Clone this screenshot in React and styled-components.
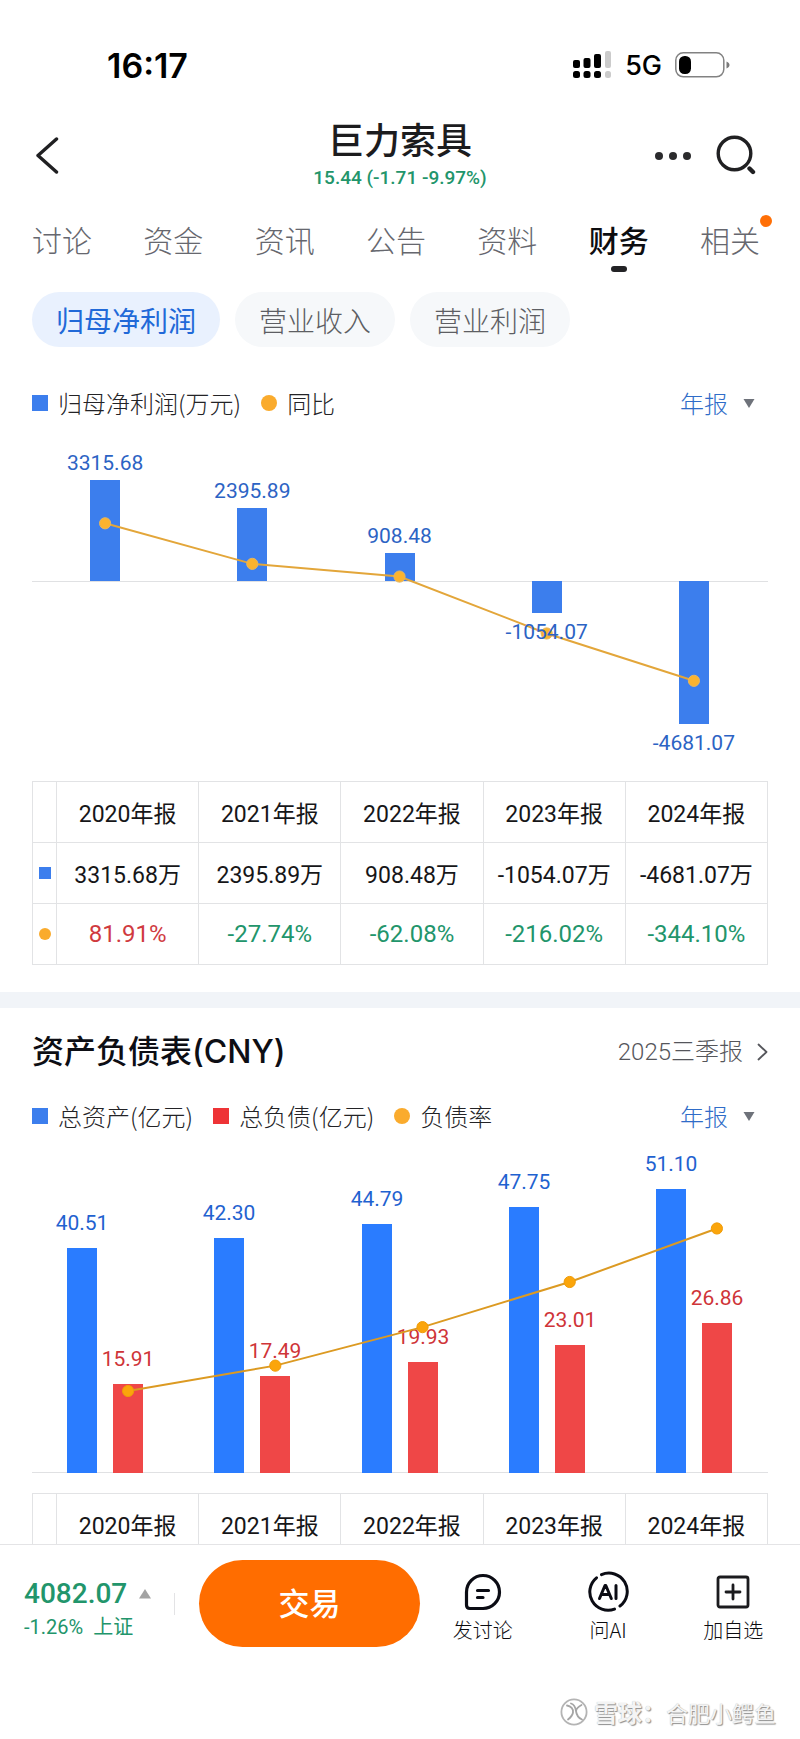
import React from "react";
import styled, { createGlobalStyle, css } from "styled-components";

const CJK = '"Noto Sans CJK SC", sans-serif';
const NUM = 'Roboto, "Noto Sans CJK SC", sans-serif';

const GlobalStyle = createGlobalStyle`
  * { box-sizing: border-box; }
  body { margin: 0; background: #fff; color: #1c1c1e; font-family: ${CJK}; }
  button, select { font: inherit; color: inherit; border: 0; padding: 0; background: none; cursor: pointer; }
  svg { display: block; flex: none; }
  h1, h2, p { margin: 0; font-weight: 500; }
`;

const Page = styled.div`
  height: 100vh;
  display: flex;
  flex-direction: column;
`;

const Content = styled.main`
  flex: 1;
  min-height: 0;
  overflow-y: auto;
  scrollbar-width: none;
`;

const StatusBar = styled.div`
  height: 110px;
  padding: 20px 70px 0 107px;
  display: flex;
  align-items: center;
  justify-content: space-between;
  flex: none;
  color: #000;
  font-family: Inter, sans-serif;
`;

const Clock = styled.span`
  font-size: 34px;
  font-weight: 600;
`;

const StatusIcons = styled.div`
  display: flex;
  align-items: center;
  gap: 13px;
  font-size: 27px;
  font-weight: 500;
`;

const Header = styled.header`
  height: 90px;
  padding: 0 36px;
  display: grid;
  grid-template-columns: 1fr auto 1fr;
  align-items: center;
  flex: none;
`;

const Heading = styled.div`
  display: grid;
  justify-items: center;
  gap: 10px;
`;

const StockName = styled.h1`
  font-size: 36px;
  line-height: 36px;
`;

const Quote = styled.p`
  font-family: ${NUM};
  font-size: 19px;
  line-height: 24px;
  color: #22956b;
`;

const HeaderActions = styled.div`
  display: flex;
  align-items: center;
  justify-content: flex-end;
  gap: 25px;
  padding-right: 7px;
`;

const Tabs = styled.nav`
  display: flex;
  justify-content: space-between;
  padding: 21px 40px 0 32px;
  flex: none;
`;

const Tab = styled.button`
  position: relative;
  display: flex;
  flex-direction: column;
  align-items: center;
  gap: 9px;
  font-size: 30px;
  line-height: 36px;
  font-weight: 300;
  color: #66676e;
  &::after {
    content: "";
    width: 16px;
    height: 6px;
    border-radius: 3px;
  }
  ${(p) =>
    p.$active &&
    css`
      color: #0d0d10;
      font-weight: 500;
      &::after { background: #232326; }
    `}
`;

const Badge = styled.span`
  position: absolute;
  top: -6px;
  right: -12px;
  width: 12px;
  height: 12px;
  border-radius: 50%;
  background: #ff6f06;
`;

const Pills = styled.div`
  display: flex;
  gap: 15px;
  padding: 20px 0 0;
`;

const Pill = styled.button`
  height: 55px;
  padding: 0 24px;
  border-radius: 28px;
  font-size: 28px;
  line-height: 40px;
  font-weight: ${(p) => (p.$active ? 400 : 300)};
  color: ${(p) => (p.$active ? "#2169d8" : "#5d5e63")};
  background: ${(p) => (p.$active ? "#e9f1fe" : "#f6f8fa")};
`;

const Section = styled.section`
  padding: 0 32px 27px;
  & + & {
    border-top: 16px solid #f1f4f8;
    padding-top: 20px;
  }
`;

const SectionHead = styled.div`
  height: 48px;
  margin-bottom: 24px;
  display: flex;
  align-items: center;
  justify-content: space-between;
`;

const SectionTitle = styled.h2`
  font-family: Inter, ${CJK};
  font-size: 32px;
  line-height: 44px;
  color: #0d0e14;
`;

const ReportLink = styled.a`
  display: flex;
  align-items: center;
  gap: 14px;
  font-family: ${NUM};
  font-size: 24px;
  line-height: 32px;
  font-weight: 300;
  color: #55565b;
  text-decoration: none;
`;

const LegendRow = styled.div`
  display: flex;
  align-items: center;
  gap: 20px;
  font-size: 24px;
  line-height: 32px;
  font-weight: 300;
  color: #232326;
  margin-top: ${(p) => p.$top || 0}px;
`;

const LegendItem = styled.span`
  display: flex;
  align-items: center;
  gap: 10px;
`;

const Mark = styled.i`
  display: block;
  flex: none;
  width: ${(p) => p.$size || 16}px;
  height: ${(p) => p.$size || 16}px;
  border-radius: ${(p) => (p.$round ? "50%" : 0)};
  background: ${(p) => p.$color};
`;

const Period = styled.label`
  display: flex;
  align-items: center;
  gap: 15px;
  margin: 0 13px 0 auto;
  color: #2f6cc8;
`;

const PeriodSelect = styled.select`
  appearance: none;
  line-height: 32px;
  outline: none;
`;

const Plot = styled.svg`
  width: 100%;
  height: auto;
  margin: ${(p) => p.$top}px 0 18px;
  overflow: visible;
`;

const BarLabel = styled.text`
  font-family: ${NUM};
  font-size: 21px;
  text-anchor: middle;
`;

const Table = styled.table`
  width: 100%;
  table-layout: fixed;
  border-collapse: collapse;
  font-family: ${NUM};
  font-size: 23px;
  color: #161618;
`;

const Cell = styled.td`
  height: 61px;
  padding: 0;
  border: 1px solid #e2e3e5;
  text-align: center;
  font-weight: 400;
  white-space: nowrap;
`;

const RateCell = styled(Cell)`
  font-size: 24px;
  color: ${(p) => (p.$up ? "#d03a3f" : "#22956b")};
`;

const MarkCell = styled(Cell)`
  width: 24px;
  & > i { margin: 0 auto; }
`;

const BottomBar = styled.footer`
  flex: none;
  border-top: 1px solid #e4e4e6;
  background: #fff;
`;

const Actions = styled.div`
  display: flex;
  align-items: center;
  padding: 15px 4px 0 24px;
`;

const Index = styled.div`
  display: grid;
  gap: 1px;
  width: 150px;
  padding-top: 10px;
  font-family: ${NUM};
  color: #22956b;
`;

const IndexValue = styled.div`
  display: flex;
  align-items: center;
  gap: 12px;
  font-size: 28px;
  line-height: 36px;
  font-weight: 500;
`;

const IndexChange = styled.div`
  display: flex;
  gap: 10px;
  font-size: 20px;
  line-height: 28px;
`;

const Divider = styled.div`
  width: 1px;
  height: 22px;
  margin-right: 24px;
  background: #e3e3e5;
`;

const TradeButton = styled.button`
  width: 221px;
  height: 87px;
  padding-bottom: 4px;
  border-radius: 44px;
  background: #ff6d00;
  color: #fff;
  font-size: 31px;
  font-weight: 500;
`;

const Action = styled.button`
  flex: 1;
  display: flex;
  flex-direction: column;
  align-items: center;
  gap: 3px;
  padding-top: 7px;
  font-size: 20px;
  line-height: 28px;
  color: #0c0c10;
  font-weight: 300;
`;

const Watermark = styled.div`
  display: flex;
  align-items: center;
  justify-content: flex-end;
  gap: 6px;
  padding: 49px 24px 11px 0;
  line-height: 32px;
  font-size: 22px;
  color: #f4f4f4;
  text-shadow: 1px 1px 1px #8e8e8e, 0 0 1px #bbb;
`;

const Brand = styled.span`
  font-size: 24px;
  font-weight: 700;
`;

const WIDTH = 736;
const SLOT = WIDTH / 5;
const BAR = 30;
const centre = (i) => SLOT * (i + 0.5) - 0.5;
const YEARS = ["2020年报", "2021年报", "2022年报", "2023年报", "2024年报"];

const PROFIT = [3315.68, 2395.89, 908.48, -1054.07, -4681.07];
const GROWTH = [81.91, -27.74, -62.08, -216.02, -344.1];
const ASSETS = [40.51, 42.3, 44.79, 47.75, 51.1];
const DEBTS = [15.91, 17.49, 19.93, 23.01, 26.86];

function Line({ points, stroke, fill, ring }) {
  return (
    <g>
      <polyline points={points.map((p) => p.join(",")).join(" ")} fill="none" stroke={stroke} strokeWidth="2" />
      {points.map(([x, y]) => (
        <circle key={x} cx={x} cy={y} r="5.6" fill={fill} stroke={ring} strokeWidth="1" />
      ))}
    </g>
  );
}

function ProfitChart() {
  const zero = 142;
  const scale = 0.0305;
  const points = GROWTH.map((g, i) => [centre(i), 114.6 - g * 0.3697]);
  return (
    <Plot viewBox={`0 0 ${WIDTH} 324`} $top={20} role="img" aria-label="归母净利润">
      <line x1="0" x2={WIDTH} y1={zero + 0.5} y2={zero + 0.5} stroke="#e0e1e3" />
      {PROFIT.map((v, i) => {
        const h = Math.round(Math.abs(v) * scale);
        return (
          <rect key={v} x={Math.round(centre(i)) - 15} y={v > 0 ? zero - h : zero} width={BAR} height={h} fill="#3c7eed" />
        );
      })}
      <Line points={points} stroke="#e3a63a" fill="#fbb32f" ring="#e5b662" />
      {PROFIT.map((v, i) => (
        <BarLabel key={v} x={centre(i)} y={v > 0 ? zero - v * scale - 10 : zero - v * scale + 26} fill="#2c63c4">
          {v.toFixed(2)}
        </BarLabel>
      ))}
    </Plot>
  );
}

function BalanceChart() {
  const base = 333;
  const scale = 5.566;
  const rates = DEBTS.map((d, i) => (d / ASSETS[i]) * 100);
  const points = rates.map((r, i) => [centre(i) + 23, 251 - (r - rates[0]) * 12.23]);
  const series = [
    { data: ASSETS, shift: -23, fill: "#2a7cff", text: "#1f62d0" },
    { data: DEBTS, shift: 23, fill: "#ef4747", text: "#cf3438" },
  ];
  return (
    <Plot viewBox={`0 0 ${WIDTH} 335`} $top={8} role="img" aria-label="资产负债表">
      <line x1="0" x2={WIDTH} y1={base - 0.5} y2={base - 0.5} stroke="#e0e1e3" />
      {series.map((s) =>
        s.data.map((v, i) => {
          const x = Math.round(centre(i) + s.shift);
          const h = Math.round(v * scale);
          return (
            <g key={v}>
              <rect x={x - 15} y={base - h} width={BAR} height={h} fill={s.fill} />
              <BarLabel x={x} y={base - h - 18} fill={s.text}>
                {v.toFixed(2)}
              </BarLabel>
            </g>
          );
        })
      )}
      <Line points={points} stroke="#dc9a22" fill="#fba50b" ring="#f09c08" />
    </Plot>
  );
}

function PeriodPicker() {
  return (
    <Period>
      <PeriodSelect aria-label="报告期" defaultValue="年报">
        <option>年报</option>
      </PeriodSelect>
      <svg width="12" height="10" viewBox="0 0 12 10">
        <path d="M.5 1h11L6 10z" fill="#6e727a" />
      </svg>
    </Period>
  );
}

function YearHead() {
  return (
    <thead>
      <tr>
        <MarkCell />
        {YEARS.map((y) => (
          <Cell as="th" scope="col" key={y}>{y}</Cell>
        ))}
      </tr>
    </thead>
  );
}

const BLUE = "#3c7eed";
const ORANGE = "#faab2d";

export default function App() {
  return (
    <Page>
      <GlobalStyle />
      <StatusBar>
        <Clock>16:17</Clock>
        <StatusIcons>
          <svg width="39" height="28" viewBox="0 0 39 28">
            <g fill="#000">
              <rect x="0" y="9" width="7" height="8" rx="2" />
              <rect x="10.500" y="7" width="7" height="10" rx="2" />
              <rect x="21" y="3" width="7" height="14" rx="2" />
              <rect x="0" y="20" width="7" height="7" rx="2.500" />
              <rect x="10.500" y="20" width="7" height="7" rx="2.500" />
              <rect x="21" y="20" width="7" height="7" rx="2.500" />
            </g>
            <g fill="#cbcbcb">
              <rect x="32" y="0" width="6" height="17" rx="2" />
              <rect x="32" y="20" width="6" height="7" rx="2.500" />
            </g>
          </svg>
          <span>5G</span>
          <svg width="55" height="26" viewBox="0 0 55 26">
            <rect x=".8" y=".8" width="48" height="24" rx="7.500" fill="none" stroke="#828282" strokeWidth="1.500" />
            <rect x="4" y="4" width="12" height="18" rx="5.500" fill="#000" />
            <path d="M51.500 9.500c2 1 3 2 3 3.500s-1 2.500-3 3.500z" fill="#7a7a7a" />
          </svg>
        </StatusIcons>
      </StatusBar>

      <Header>
        <button aria-label="返回">
          <svg width="24" height="38" viewBox="0 0 24 38">
            <path d="M20.500 3 2 19.500 20.500 36" fill="none" stroke="#202022" strokeWidth="3.400" strokeLinecap="round" strokeLinejoin="round" />
          </svg>
        </button>
        <Heading>
          <StockName>巨力索具</StockName>
          <Quote>15.44 (-1.71 -9.97%)</Quote>
        </Heading>
        <HeaderActions>
          <button aria-label="更多">
            <svg width="36" height="10" viewBox="0 0 36 10">
              <g fill="#2b2b2d">
                <circle cx="4" cy="6" r="4" />
                <circle cx="18" cy="6" r="4" />
                <circle cx="32" cy="6" r="4" />
              </g>
            </svg>
          </button>
          <button aria-label="搜索">
            <svg width="41" height="40" viewBox="0 0 41 40">
              <circle cx="18.500" cy="18.500" r="16.300" fill="none" stroke="#202022" strokeWidth="3.400" />
              <path d="m33.500 33.500 3.500 3.500" stroke="#202022" strokeWidth="4.400" strokeLinecap="round" />
            </svg>
          </button>
        </HeaderActions>
      </Header>

      <Tabs>
        {["讨论", "资金", "资讯", "公告", "资料", "财务", "相关"].map((t) => (
          <Tab key={t} $active={t === "财务"}>
            {t}
            {t === "相关" && <Badge />}
          </Tab>
        ))}
      </Tabs>

      <Content>
        <Section>
          <Pills>
            <Pill $active>归母净利润</Pill>
            <Pill>营业收入</Pill>
            <Pill>营业利润</Pill>
          </Pills>
          <LegendRow $top={40}>
            <LegendItem><Mark $color={BLUE} />归母净利润(万元)</LegendItem>
            <LegendItem><Mark $color={ORANGE} $round />同比</LegendItem>
            <PeriodPicker />
          </LegendRow>
          <ProfitChart />
          <Table>
            <YearHead />
            <tbody>
              <tr>
                <MarkCell><Mark $size={12} $color={BLUE} /></MarkCell>
                {PROFIT.map((v) => (
                  <Cell key={v}>{v.toFixed(2)}万</Cell>
                ))}
              </tr>
              <tr>
                <MarkCell><Mark $size={12} $color={ORANGE} $round /></MarkCell>
                {GROWTH.map((v) => (
                  <RateCell key={v} $up={v > 0}>{v.toFixed(2)}%</RateCell>
                ))}
              </tr>
            </tbody>
          </Table>
        </Section>

        <Section>
          <SectionHead>
            <SectionTitle>资产负债表(CNY)</SectionTitle>
            <ReportLink href="#report">
              2025三季报
              <svg width="11" height="18" viewBox="0 0 11 18">
                <path d="m1.500 1.500 8 7.500-8 7.500" fill="none" stroke="#55565b" strokeWidth="1.800" strokeLinecap="round" strokeLinejoin="round" />
              </svg>
            </ReportLink>
          </SectionHead>
          <LegendRow>
            <LegendItem><Mark $color={BLUE} />总资产(亿元)</LegendItem>
            <LegendItem><Mark $color="#ee3336" />总负债(亿元)</LegendItem>
            <LegendItem><Mark $color={ORANGE} $round />负债率</LegendItem>
            <PeriodPicker />
          </LegendRow>
          <BalanceChart />
          <Table>
            <YearHead />
          </Table>
        </Section>
      </Content>

      <BottomBar>
        <Actions>
          <Index>
            <IndexValue>
              4082.07
              <svg width="12" height="10" viewBox="0 0 12 10">
                <path d="M6 0l6 9.500H0z" fill="#a3a3a3" />
              </svg>
            </IndexValue>
            <IndexChange>
              <span>-1.26%</span>
              <span>上证</span>
            </IndexChange>
          </Index>
          <Divider />
          <TradeButton>交易</TradeButton>
          <Action>
            <svg width="42" height="42" viewBox="0 0 42 42" fill="none" stroke="#0b0c14" strokeWidth="3.200" strokeLinecap="round" strokeLinejoin="round">
              <path d="M21 4.500a16.500 16.500 0 0 1 0 33H8q-3.500 0-3.500-3.500V21A16.500 16.500 0 0 1 21 4.500z" />
              <path d="M15.500 19.500h11M15.500 26.500h5.500" />
            </svg>
            发讨论
          </Action>
          <Action>
            <svg width="42" height="42" viewBox="0 0 42 42" fill="none" stroke="#0b0c14" strokeWidth="3" strokeLinecap="round" strokeLinejoin="round">
              <path d="M14.500 3.700A18.300 18.300 0 0 1 33 35M27.500 38.100A18.300 18.300 0 0 1 9.500 6.800" />
              <path d="M12.500 27.500 18 14.500h.800l5.500 13M14.500 23.500h7.800M29 14.500v13" />
            </svg>
            问AI
          </Action>
          <Action>
            <svg width="42" height="42" viewBox="0 0 42 42" fill="none" stroke="#1b1b1e" strokeWidth="2.800" strokeLinecap="round" strokeLinejoin="round">
              <rect x="6" y="6" width="30" height="30" rx="2" />
              <path d="M14 21h14M21 14v14" />
            </svg>
            加自选
          </Action>
        </Actions>
        <Watermark>
          <svg width="28" height="28" viewBox="0 0 28 28" fill="none" strokeLinecap="round">
            <circle cx="14" cy="14" r="12.600" stroke="#b4b4b4" strokeWidth="1.800" />
            <path d="M7 7.500c4 .5 6.500 3.500 6 7-.4 3-2.500 5-5 7M11 5.500c3.500 1 4.500 4 5 7.500.5 4 2.500 7 6 8.500M21.500 7c-3 1.500-5 3.500-5.500 6" stroke="#a5a5a5" strokeWidth="1.800" />
          </svg>
          <span><Brand>雪球：</Brand>合肥小鳄鱼</span>
        </Watermark>
      </BottomBar>
    </Page>
  );
}
